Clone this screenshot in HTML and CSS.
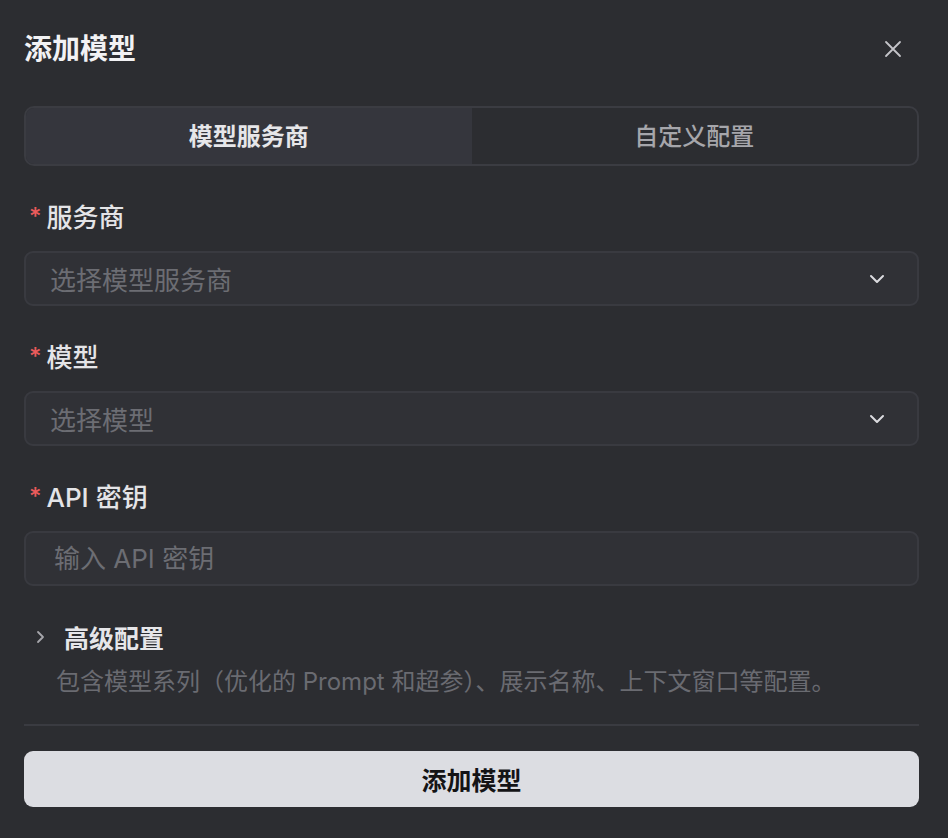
FILE: index.html
```html
<!DOCTYPE html>
<html lang="zh-CN">

<head>
    <meta charset="UTF-8">
    <meta name="viewport" content="width=device-width, initial-scale=1.0">
    <title>添加模型</title>
    <link rel="stylesheet" href="styles.css">
</head>

<body>
    <div class="dialog">
        <div class="header">
            <h1>添加模型</h1>
            <button class="close" aria-label="关闭">
                <svg width="18" height="18" viewBox="0 0 18 18">
                    <path d="M2 2 L16 16 M16 2 L2 16" stroke="currentColor" stroke-width="1.8" stroke-linecap="round" fill="none" />
                </svg>
            </button>
        </div>

        <div class="tabs">
            <div class="tab active">模型服务商</div>
            <div class="tab">自定义配置</div>
        </div>

        <label class="field-label"><span class="req">*</span>服务商</label>
        <div class="select">
            <span class="placeholder">选择模型服务商</span>
            <svg class="chevron" width="16" height="10" viewBox="0 0 16 10">
                <path d="M2 2 L8 8 L14 2" stroke="currentColor" stroke-width="2" stroke-linecap="round" stroke-linejoin="round" fill="none" />
            </svg>
        </div>

        <label class="field-label"><span class="req">*</span>模型</label>
        <div class="select">
            <span class="placeholder">选择模型</span>
            <svg class="chevron" width="16" height="10" viewBox="0 0 16 10">
                <path d="M2 2 L8 8 L14 2" stroke="currentColor" stroke-width="2" stroke-linecap="round" stroke-linejoin="round" fill="none" />
            </svg>
        </div>

        <label class="field-label" for="apiKey"><span class="req">*</span>API 密钥</label>
        <input class="text-input" type="text" id="apiKey" placeholder="输入 API 密钥">

        <div class="advanced">
            <svg class="arrow" width="10" height="14" viewBox="0 0 10 14">
                <path d="M3 2 L8 7 L3 12" stroke="currentColor" stroke-width="1.8" stroke-linecap="round" stroke-linejoin="round" fill="none" />
            </svg>
            <span>高级配置</span>
        </div>
        <p class="desc">包含模型系列（优化的 Prompt 和超参）、展示名称、上下文窗口等配置。</p>

        <div class="divider"></div>

        <button class="submit">添加模型</button>
    </div>
</body>

</html>
```

FILE: styles.css
```css
body {
    margin: 0;
    background-color: #2c2d31;
    color: #ececee;
    font-family: Inter, "Noto Sans CJK SC", sans-serif;
}

.dialog {
    padding: 0 29px 0 24px;
    display: flex;
    flex-direction: column;
}

.header {
    display: flex;
    align-items: center;
    justify-content: space-between;
    padding-top: 30px;
    height: 38px;
}

.header h1 {
    margin: 0;
    font-size: 28px;
    line-height: 38px;
    font-weight: 700;
    color: #f2f2f4;
}

.close {
    background: none;
    border: none;
    color: #c4c4c9;
    padding: 0;
    margin-right: 17px;
    display: flex;
    cursor: pointer;
}

.tabs {
    margin-top: 38px;
    height: 56px;
    flex-shrink: 0;
    display: flex;
    border: 2px solid #3b3c42;
    border-radius: 10px;
    overflow: hidden;
}

.tab {
    flex: 1;
    display: flex;
    align-items: center;
    justify-content: center;
    padding-bottom: 4px;
    font-size: 24px;
    font-weight: 500;
    color: #a6a6ab;
}

.tab.active {
    background-color: #35363d;
    color: #e6e6e9;
    font-weight: 700;
}

.field-label {
    display: flex;
    align-items: center;
    flex-shrink: 0;
    margin-top: 31px;
    height: 38px;
    padding-bottom: 2px;
    box-sizing: border-box;
    font-size: 26px;
    font-weight: 500;
    color: #e4e4e7;
}

.req {
    color: #ec5b5b;
    font-size: 24px;
    margin: 0 5px 0 5px;
    position: relative;
    top: 1px;
}

.select,
.text-input {
    margin-top: 16px;
    height: 55px;
    flex-shrink: 0;
    box-sizing: border-box;
    border: 2px solid #393a40;
    border-radius: 9px;
    background-color: #303136;
}

.select {
    display: flex;
    align-items: center;
    justify-content: space-between;
    padding: 0 32px 0 24px;
}

.placeholder,
.text-input::placeholder {
    color: #6c6d73;
    font-size: 26px;
}

.chevron {
    color: #dcdce0;
}

.text-input {
    width: 100%;
    padding: 0 28px;
    font-family: inherit;
    font-size: 26px;
    color: #e4e4e7;
    outline: none;
}

.advanced {
    margin-top: 33px;
    height: 36px;
    display: flex;
    align-items: center;
    font-size: 25px;
    font-weight: 700;
    color: #e6e6e9;
}

.advanced .arrow {
    color: #a6a6ab;
    margin: 0 19px 0 11px;
}

.desc {
    margin: 10px 0 0 32px;
    line-height: 34px;
    font-size: 24px;
    color: #6a6b71;
}

.divider {
    margin-top: 25px;
    height: 2px;
    flex-shrink: 0;
    background-color: #3a3b41;
}

.submit {
    margin-top: 25px;
    height: 56px;
    flex-shrink: 0;
    border: none;
    border-radius: 9px;
    background-color: #dcdde2;
    color: #141416;
    font-family: inherit;
    font-size: 25px;
    font-weight: 700;
    cursor: pointer;
}
```
